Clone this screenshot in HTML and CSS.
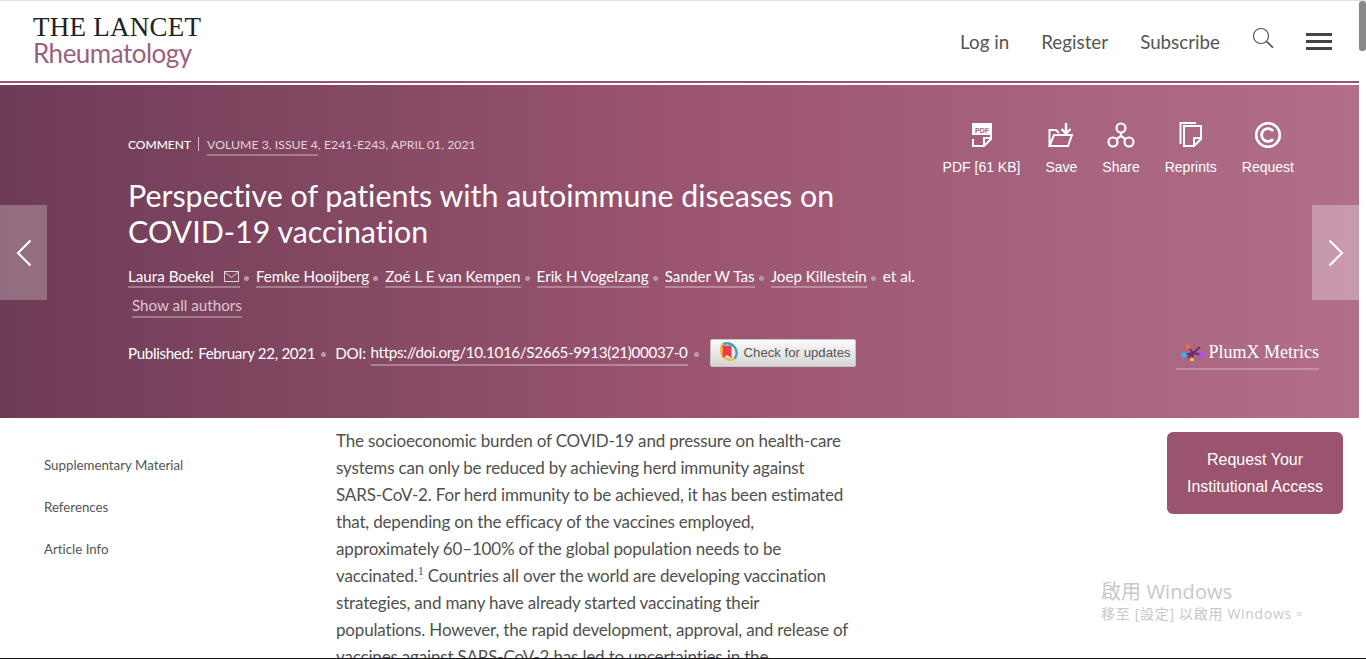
FILE: index.html
```html
<!DOCTYPE html>
<html lang="en">
<head>
  <meta charset="UTF-8" />
  <title>Perspective of patients with autoimmune diseases on COVID-19 vaccination</title>
  <link rel="stylesheet" href="styles.css">
</head>
<body>
  <div class="page">
    <header class="topbar">
      <div class="logo">
        <div class="logo-main">THE LANCET</div>
        <div class="logo-sub">Rheumatology</div>
      </div>
      <nav class="topnav">
        <a class="nav-login">Log in</a>
        <a class="nav-register">Register</a>
        <a class="nav-subscribe">Subscribe</a>
        <svg class="search-icon" width="22" height="22" viewBox="0 0 22 22" fill="none" stroke="#555" stroke-width="1.2">
          <circle cx="9" cy="9" r="7.5"/>
          <path d="M14.4 14.4 L21 20.6" stroke-width="1.6"/>
        </svg>
        <div class="burger"><span></span><span></span><span></span></div>
      </nav>
    </header>

    <section class="hero">
      <a class="arrow arrow-left">
        <svg width="16" height="28" viewBox="0 0 16 28" fill="none" stroke="#fff" stroke-width="2.2"><path d="M14.5 1.5 L2 14 L14.5 26.5"/></svg>
      </a>
      <a class="arrow arrow-right">
        <svg width="16" height="28" viewBox="0 0 16 28" fill="none" stroke="#fff" stroke-width="2.2"><path d="M1.5 1.5 L14 14 L1.5 26.5"/></svg>
      </a>

      <div class="hero-main">
        <p class="meta"><b>COMMENT</b><i class="bar"></i><a class="meta-link">VOLUME 3, ISSUE 4</a>, E241-E243, APRIL 01, 2021</p>
        <h1>Perspective of patients with autoimmune diseases on COVID-19 vaccination</h1>
        <ul class="authors">
          <li><a>Laura Boekel<svg class="mail" width="15" height="11" viewBox="0 0 15 11" fill="none" stroke="#e3cfd8"><rect x="0.5" y="0.5" width="14" height="10"/><path d="M0.5 1 L7.5 6.5 L14.5 1"/></svg></a></li>
          <li><a>Femke Hooijberg</a></li>
          <li><a>Zoé L E van Kempen</a></li>
          <li><a>Erik H Vogelzang</a></li>
          <li><a>Sander W Tas</a></li>
          <li><a>Joep Killestein</a></li>
          <li>et al.</li>
        </ul>
        <a class="show-all">Show all authors</a>
        <div class="published">
          <span>Published:</span><span class="pub-date">February 22, 2021</span><i class="dot"></i>
          <span>DOI:</span><a class="doi">https://doi.org/10.1016/S2665-9913(21)00037-0</a><i class="dot"></i>
          <a class="updates">
            <svg width="24" height="24" viewBox="0 0 24 24" fill="none">
              <path d="M8 3.2 A9.6 9.6 0 0 1 19.6 17.8" stroke="#3ba7b8" stroke-width="2.6"/>
              <path d="M8 3.2 A9.6 9.6 0 0 0 19.6 17.8" stroke="#f0c23c" stroke-width="2.6"/>
              <path d="M7.5 4.5 H16.5 V17 L12 14 L7.5 17 Z" fill="#ee3d4a"/>
            </svg>
            Check for updates
          </a>
        </div>
      </div>

      <div class="hero-side">
        <div class="actions">
          <a class="action">
            <svg width="22" height="26" viewBox="0 0 22 26" fill="none" stroke="#fff" stroke-width="2">
              <path d="M2 13 V2 H20 V17 L13 24 H2 V17"/>
              <path d="M20 16 H13 V24"/>
              <rect x="2" y="2" width="18" height="11" fill="#fff" stroke="none"/>
              <text class="pdf-mark" x="11" y="10.5" text-anchor="middle">PDF</text>
            </svg>
            <span>PDF [61 KB]</span>
          </a>
          <a class="action">
            <svg width="26" height="26" viewBox="0 0 26 26" fill="none" stroke="#fff" stroke-width="2">
              <path d="M1.5 24 V8 H8 L11 11 M1.5 24 L6 13 H24 L20 24 Z"/>
              <path d="M18 1 V11 M13.5 7 L18 11.5 L22.5 7" stroke-width="2.4"/>
            </svg>
            <span>Save</span>
          </a>
          <a class="action">
            <svg width="28" height="26" viewBox="0 0 28 26" fill="none" stroke="#fff" stroke-width="2.2">
              <circle cx="14" cy="6" r="4.5"/><circle cx="6" cy="20" r="4.5"/><circle cx="22" cy="20" r="4.5"/>
              <path d="M14 10.5 V14 M14 14 L9.5 17 M14 14 L18.5 17"/>
            </svg>
            <span>Share</span>
          </a>
          <a class="action">
            <svg width="24" height="26" viewBox="0 0 24 26" fill="none" stroke="#fff" stroke-width="2">
              <path d="M5 4 H22 V17 L15 24 H5 Z"/>
              <path d="M22 16 H15 V24"/>
              <path d="M17 1 H1.5 V22"/>
            </svg>
            <span>Reprints</span>
          </a>
          <a class="action">
            <svg width="28" height="26" viewBox="0 0 28 26" fill="none" stroke="#fff">
              <circle cx="14" cy="13" r="11.8" stroke-width="2.6"/>
              <path d="M19 9 A6.4 6.4 0 1 0 19 17" stroke-width="2.8"/>
            </svg>
            <span>Request</span>
          </a>
        </div>
        <a class="plumx">
          <svg width="24" height="18" viewBox="0 0 24 18" fill="none">
            <path d="M7 3 L12 9 M12 9 L19 3 M12 9 L3 11 M12 9 L21 11 M12 9 L11 15 M12 9 L7 14" stroke="#6b2a73" stroke-width="1.8"/>
            <circle cx="7" cy="3" r="2.4" fill="#ee6a3a"/>
            <circle cx="3" cy="11" r="2.8" fill="#35b4e8"/>
            <circle cx="21" cy="11" r="2.8" fill="#b64be8"/>
            <circle cx="11" cy="15.5" r="2" fill="#f2c23c"/>
          </svg>
          PlumX Metrics
        </a>
      </div>
    </section>

    <section class="content">
      <aside class="sidenav">
        <a>Supplementary Material</a>
        <a>References</a>
        <a>Article Info</a>
      </aside>
      <article class="article">
        <p>The socioeconomic burden of COVID-19 and pressure on health-care systems can only be reduced by achieving herd immunity against SARS-CoV-2. For herd immunity to be achieved, it has been estimated that, depending on the efficacy of the vaccines employed, approximately 60–100% of the global population needs to be vaccinated.<sup>1</sup> Countries all over the world are developing vaccination strategies, and many have already started vaccinating their populations. However, the rapid development, approval, and release of vaccines against SARS-CoV-2 has led to uncertainties in the</p>
      </article>
      <div class="side-right">
        <a class="access-btn">Request Your<br>Institutional Access</a>
      </div>
    </section>
  </div>

  <div class="scrollbar"><div class="scroll-thumb"></div></div>

  <div class="watermark">
    <div class="wm-title">啟用 Windows</div>
    <div class="wm-sub">移至 [設定] 以啟用 Windows。</div>
  </div>
</body>
</html>
```

FILE: styles.css
```css
* {
  box-sizing: border-box;
}

html, body {
  margin: 0;
  height: 659px;
  overflow: hidden;
}

body {
  display: flex;
  font-family: 'Lato', 'Noto Sans', sans-serif;
  font-variant-ligatures: none;
  background: white;
  border-top: 1px solid #dfe0e4;
  border-bottom: 1px solid #111;
}

.page {
  flex: 1;
  min-width: 0;
}

.topbar {
  height: 80px;
  display: flex;
  justify-content: space-between;
  align-items: center;
  padding: 0 27px 0 33px;
}

.logo-main {
  font-family: 'Liberation Serif', serif;
  font-size: 27px;
  line-height: 26px;
  letter-spacing: 0.25px;
  color: #222;
}

.logo-sub {
  font-size: 26px;
  line-height: 30px;
  letter-spacing: -0.5px;
  color: #9b5f7c;
  margin-top: -2px;
}

.topnav {
  display: flex;
  align-items: center;
  gap: 32px;
  font-size: 18.8px;
  color: #555;
}

.search-icon {
  margin: -6px 0 0 0;
}

.burger {
  width: 26px;
  display: flex;
  flex-direction: column;
  gap: 4px;
}

.burger span {
  height: 3px;
  background: #444;
}

.hero {
  position: relative;
  height: 337px;
  border-top: 2px solid #9b5470;
  box-shadow: inset 0 2px 0 white;
  background: linear-gradient(90deg, #6e3c56 0%, #9a5470 50%, #b16f8a 100%);
  padding: 2px 40px 0 128px;
  display: flex;
  justify-content: space-between;
  color: white;
}

.arrow {
  position: absolute;
  top: 122px;
  width: 47px;
  height: 95px;
  display: flex;
  align-items: center;
  justify-content: center;
}

.arrow-left {
  left: 0;
  background: rgba(255, 255, 255, 0.25);
}

.arrow-right {
  right: 0;
  background: rgba(255, 255, 255, 0.3);
}

.hero-main {
  width: 800px;
}

.meta {
  margin: 50px 0 0;
  font-size: 12.3px;
  line-height: 20px;
  color: #e6d3db;
}

.meta b {
  font-weight: 500;
  font-size: 12px;
  color: white;
}

.bar {
  display: inline-block;
  width: 1px;
  height: 14px;
  background: #d9bcc8;
  margin: 0 8px 0 7px;
  vertical-align: -2px;
}

.meta-link {
  border-bottom: 2px solid rgba(255, 255, 255, 0.3);
  padding-bottom: 2px;
}

h1 {
  margin: 22px 0 0;
  font-size: 30.4px;
  line-height: 36px;
  font-weight: 400;
}

.authors {
  list-style: none;
  margin: 15px 0 0;
  padding: 0;
  display: flex;
  white-space: nowrap;
  font-size: 15.2px;
  line-height: 24px;
}

.authors li + li::before {
  content: "";
  display: inline-block;
  width: 5px;
  height: 5px;
  border-radius: 50%;
  background: #b79aa8;
  margin: 0 7px 0 4px;
  vertical-align: 1px;
}

.authors a {
  border-bottom: 2px solid rgba(255, 255, 255, 0.3);
  padding-bottom: 1px;
}

.mail {
  margin: 0 1px 0 10px;
}

.show-all {
  display: inline-block;
  margin: 6px 0 0 4px;
  font-size: 15.2px;
  line-height: 22px;
  color: #dcc7d0;
  border-bottom: 2px solid rgba(255, 255, 255, 0.3);
}

.published {
  display: flex;
  align-items: center;
  white-space: nowrap;
  margin-top: 21px;
  font-size: 15.2px;
  line-height: 24px;
  letter-spacing: -0.35px;
}

.pub-date {
  margin-left: 5px;
}

.dot {
  width: 5px;
  height: 5px;
  border-radius: 50%;
  background: #b79aa8;
  margin: 3px 9px 0 6px;
}

.doi {
  margin-left: 5px;
  border-bottom: 2px solid rgba(255, 255, 255, 0.3);
}

.updates {
  display: flex;
  align-items: center;
  gap: 5px;
  width: 146px;
  height: 28px;
  margin-left: 2px;
  padding-left: 4px;
  font-family: 'Liberation Sans', sans-serif;
  font-size: 13.2px;
  letter-spacing: 0;
  color: #555;
  background: linear-gradient(#fbfbfb, #d5d5d5);
  border: 1px solid #c9c3c6;
  border-radius: 2px;
}

.hero-side {
  display: flex;
  flex-direction: column;
  align-items: flex-end;
}

.actions {
  display: flex;
  gap: 25px;
  margin: 37px 25px 0 0;
  font-family: 'Liberation Sans', sans-serif;
  font-size: 14px;
}

.action {
  display: flex;
  flex-direction: column;
  align-items: center;
  gap: 11px;
}

.pdf-mark {
  font-family: 'Liberation Sans', sans-serif;
  font-size: 7px;
  font-weight: bold;
  fill: #a9637f;
  stroke: none;
}

.plumx {
  display: flex;
  align-items: center;
  justify-content: flex-end;
  gap: 4px;
  width: 143px;
  margin-top: 167px;
  padding-bottom: 5px;
  font-family: 'Liberation Serif', serif;
  font-size: 18px;
  border-bottom: 2px solid rgba(255, 255, 255, 0.25);
}

.content {
  display: flex;
  height: 240px;
  overflow: hidden;
}

.sidenav {
  width: 336px;
  padding: 38px 0 0 44px;
  display: flex;
  flex-direction: column;
  gap: 24px;
  font-size: 13.3px;
  line-height: 18px;
  color: #555;
}

.article {
  width: 516px;
  font-size: 17px;
  line-height: 27px;
  letter-spacing: -0.17px;
  color: #505050;
}

.article p {
  margin: 9px 0 0;
}

.article sup {
  font-family: 'Liberation Serif', serif;
  font-size: 12px;
  line-height: 0;
  color: #2a5d8f;
  border-bottom: 1px solid #ddd;
}

.side-right {
  flex: 1;
  display: flex;
  justify-content: flex-end;
  padding: 14px 16px 0 0;
}

.access-btn {
  width: 176px;
  height: 82px;
  padding-top: 14px;
  background: #9b5470;
  border-radius: 6px;
  text-align: center;
  color: white;
  font-family: 'Liberation Sans', sans-serif;
  font-size: 16px;
  line-height: 27px;
}

.scrollbar {
  width: 7px;
  background: white;
}

.scroll-thumb {
  height: 50px;
  background: #888;
  border-radius: 3px;
}

.watermark {
  position: absolute;
  left: 1101px;
  top: 578px;
  color: #c8c8c8;
  font-family: 'Open Sans', 'Noto Sans CJK TC', sans-serif;
}

.wm-title {
  font-size: 20px;
  line-height: 27px;
  letter-spacing: 0.1px;
}

.wm-sub {
  font-size: 14px;
  line-height: 18px;
  letter-spacing: 0.7px;
}
```
